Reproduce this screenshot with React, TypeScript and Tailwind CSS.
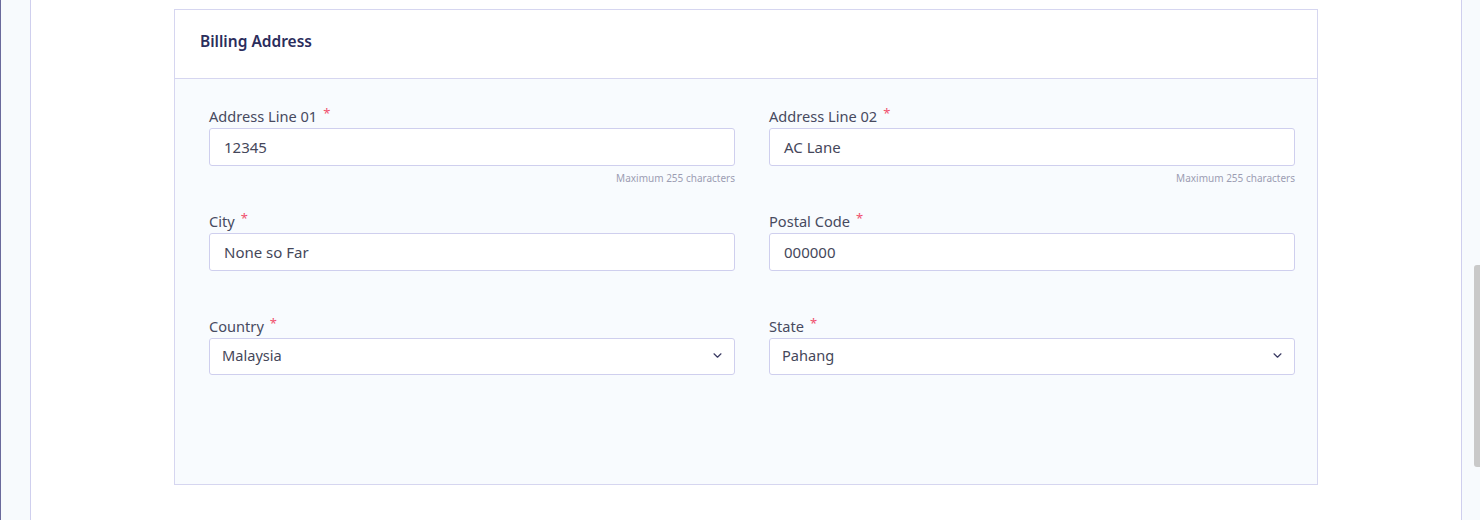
const FIELDS = [
  { label: "Address Line 01", value: "12345", hint: true },
  { label: "Address Line 02", value: "AC Lane", hint: true },
  { label: "City", value: "None so Far" },
  { label: "Postal Code", value: "000000" },
  { label: "Country", value: "Malaysia", select: true },
  { label: "State", value: "Pahang", select: true },
];

function Chevron() {
  return (
    <svg width="9" height="5" viewBox="0 0 9 5" fill="none" className="shrink-0">
      <path d="M1 0.8l3.5 3.4 3.5-3.4" stroke="#3a3b63" strokeWidth="1.2" strokeLinecap="round" strokeLinejoin="round" />
    </svg>
  );
}

function Field({ label, value, hint, select }: { label: string; value: string; hint?: boolean; select?: boolean }) {
  return (
    <div className="h-[105px] flex flex-col">
      <label className="h-[20px] leading-[20px] text-[14.6px] text-[#474a5f] flex items-start">
        {label}
        <span className="ml-[6px] text-[13px] leading-[14px] text-[#f0506e]">*</span>
      </label>
      <div
        className={`mt-[2px] bg-white border border-[#cfcfee] rounded-[3px] flex items-center text-[#45475a] ${
          select ? "h-[37px] pl-[12px] pr-[12px] pb-[2px] justify-between text-[14.6px]" : "h-[38px] pl-[14px] text-[15px]"
        }`}
      >
        <span>{value}</span>
        {select && <Chevron />}
      </div>
      {hint && (
        <div className="mt-[6px] text-right text-[10px] leading-[12px] text-[#9c9db3]">Maximum 255 characters</div>
      )}
    </div>
  );
}

export default function App() {
  return (
    <div className="h-[520px] w-[1480px] flex overflow-hidden bg-white" style={{ fontFamily: '"Noto Sans", "Open Sans", sans-serif' }}>
      {/* left rail */}
      <div className="w-[31px] h-full bg-[#f7fafd] border-l border-[#6a6a9c] border-r border-r-[#cfcfee]" />

      {/* main */}
      <main className="flex-1 h-full pt-[9px]">
        <section className="w-[1144px] mx-auto border border-[#d6d6f0]">
          <header className="h-[69px] bg-white border-b border-[#d6d6f0] flex items-center px-[25px] pb-[4px]">
            <h2 className="text-[15.5px] font-semibold text-[#2b2d5c]">Billing Address</h2>
          </header>
          <div className="h-[405px] bg-[#f8fbfe] pt-[27px] pl-[34px]">
            <div className="grid grid-cols-[526px_526px] gap-x-[34px]">
              {FIELDS.map((f) => (
                <Field key={f.label} label={f.label} value={f.value} hint={f.hint} select={f.select} />
              ))}
            </div>
          </div>
        </section>
      </main>

      {/* right strip + scrollbar */}
      <div className="w-[19px] h-full bg-[#f7fafd] border-l border-[#cfcfee] flex justify-end pt-[265px]">
        <div className="w-[6px] h-[202px] bg-[#c9c9c9] rounded-l-[3px]" />
      </div>
    </div>
  );
}
